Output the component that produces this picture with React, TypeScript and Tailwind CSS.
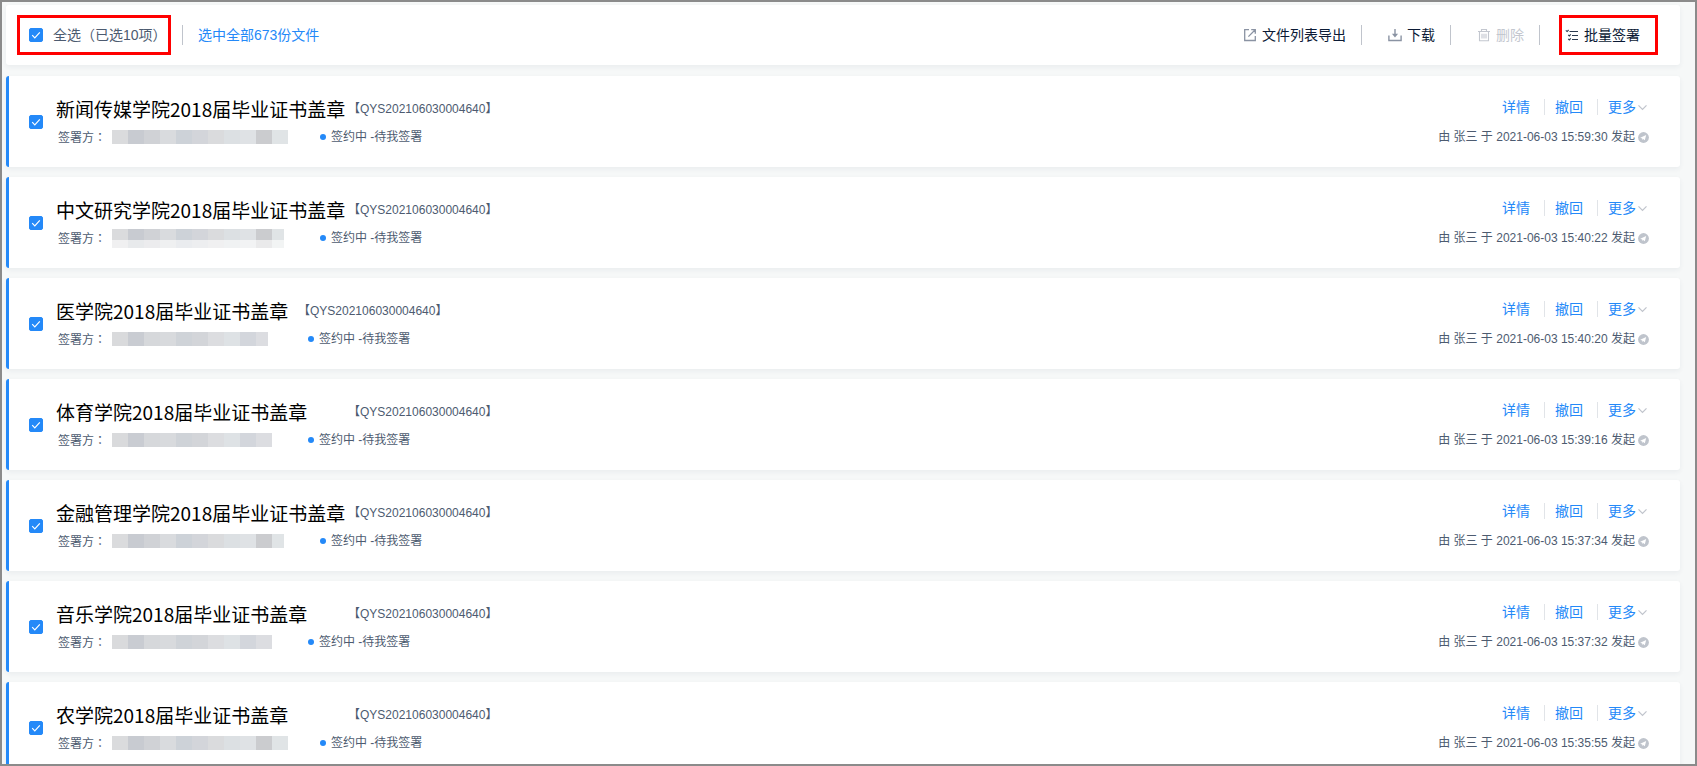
import { ReactNode } from "react";

type Row = {
  title: string;
  time: string;
  codeGap: string;
  statusGap: string;
  blocks: string[];
  last: string;
  faded?: boolean;
};

const wide = ["#dadbdd", "#c8cbd1", "#d0d2d6", "#d9dbde", "#cdd2d8", "#d3d5da", "#dadbdd", "#dce0e3", "#dfe2e5", "#cbcccf", "#e0e4e6"];
const narrow = ["#d9dadc", "#c9ccd2", "#d6d8db", "#d8dadd", "#cfd3d8", "#d3d5d9", "#dcdde0", "#dee2e5", "#d3d6dc", "#dcdde1"];

const rows: Row[] = [
  { title: "新闻传媒学院2018届毕业证书盖章", time: "2021-06-03 15:59:30", codeGap: "min-w-[292px]", statusGap: "w-52", blocks: wide, last: "w-4" },
  { title: "中文研究学院2018届毕业证书盖章", time: "2021-06-03 15:40:22", codeGap: "min-w-[292px]", statusGap: "w-52", blocks: wide, last: "w-3", faded: true },
  { title: "医学院2018届毕业证书盖章", time: "2021-06-03 15:40:20", codeGap: "min-w-[242px]", statusGap: "w-49", blocks: narrow, last: "w-3" },
  { title: "体育学院2018届毕业证书盖章", time: "2021-06-03 15:39:16", codeGap: "min-w-[292px]", statusGap: "w-49", blocks: narrow, last: "w-4" },
  { title: "金融管理学院2018届毕业证书盖章", time: "2021-06-03 15:37:34", codeGap: "min-w-[292px]", statusGap: "w-52", blocks: wide, last: "w-3" },
  { title: "音乐学院2018届毕业证书盖章", time: "2021-06-03 15:37:32", codeGap: "min-w-[292px]", statusGap: "w-49", blocks: narrow, last: "w-4" },
  { title: "农学院2018届毕业证书盖章", time: "2021-06-03 15:35:55", codeGap: "min-w-[292px]", statusGap: "w-52", blocks: wide, last: "w-4" },
];

function Check({ id, label }: { id: string; label?: string }) {
  return (
    <span className="grid size-[14px] shrink-0">
      <input
        id={id}
        type="checkbox"
        defaultChecked
        aria-label={label}
        className="peer col-start-1 row-start-1 size-[14px] appearance-none rounded-[2px] border border-[#c0c4cc] checked:border-[#2489f8] checked:bg-[#2489f8]"
      />
      <svg viewBox="0 0 14 14" className="pointer-events-none invisible col-start-1 row-start-1 size-[14px] peer-checked:visible" fill="none" stroke="#fff" strokeWidth="1.2">
        <path d="M3.2 7.2 5.8 9.8 10.8 4.4" />
      </svg>
    </span>
  );
}

function ExportIcon() {
  return (
    <svg viewBox="0 0 14 14" className="size-[14px]" fill="none" stroke="#8a93a3" strokeWidth="1.3">
      <path d="M6 1.7H1.7v10.8h10.6V8M8.2 1.7h4.1v4.1M12.2 1.8 5.4 8.6" />
    </svg>
  );
}

function DownloadIcon() {
  return (
    <svg viewBox="0 0 14 14" className="size-[14px]" fill="none" stroke="#8a93a3" strokeWidth="1.4">
      <path d="M.9 7.5v5h12.2v-5M7 1v7" />
      <path d="M3.9 5.8h6.2L7 9.4z" fill="#8a93a3" stroke="none" />
    </svg>
  );
}

function TrashIcon() {
  return (
    <svg viewBox="0 0 14 14" className="size-[14px]" fill="none" stroke="#c3c7cf" strokeWidth="1.1">
      <path d="M1 3.5h12M4.5 3.3V1.5h5v1.8M2.5 3.5v9.2h9V3.5M5 5.8v4.8M9 5.8v4.8M7 5.8v4.8" />
    </svg>
  );
}

function BatchIcon() {
  return (
    <svg viewBox="0 0 14 14" className="size-[14px]" fill="none" stroke="#2b3a50" strokeWidth="1.1">
      <path d="M4.5 3.5H13M7 7.5h6M7 11.5h6M.8 2.4l1.3 1.2L3.6 2M3.2 6.8l1.1 1.1 1.5-1.6M3.2 10.8l1.1 1.1 1.5-1.6" />
    </svg>
  );
}

function Tool({ icon, children, disabled }: { icon: ReactNode; children: string; disabled?: boolean }) {
  return (
    <button disabled={disabled} className="flex items-center gap-[5px] text-sm leading-5 text-[#0b1a35] disabled:text-[#c3c7cf]">
      {icon}
      {children}
    </button>
  );
}

function Divider() {
  return <span className="mr-[26px] ml-[15px] h-5 w-px bg-[#c0c4cc]" />;
}

function Blocks({ row, className }: { row: Row; className: string }) {
  return (
    <span className={`flex ${className}`}>
      {row.blocks.map((color, i) => (
        <span key={i} className={i === row.blocks.length - 1 ? row.last : "w-4"} style={{ backgroundColor: color }} />
      ))}
    </span>
  );
}

function FileCard({ row, index }: { row: Row; index: number }) {
  return (
    <li className="flex h-[91px] shrink-0 rounded-[3px] border-l-[3px] border-[#2489f8] bg-white pl-5 shadow-[0_2px_5px_rgba(30,50,80,0.06)]">
      <div className="mt-[39px]">
        <Check id={`file-${index}`} label={row.title} />
      </div>
      <div className="min-w-0 flex-1 pt-[19px] pl-[13px]">
        <div className="flex h-7 items-center">
          <h2 className={`font-['Noto_Sans_CJK_SC',sans-serif] text-[19px] leading-7 whitespace-nowrap text-black ${row.codeGap}`}>{row.title}</h2>
          <span className="text-xs leading-5 whitespace-nowrap text-[#4d5b70]">【QYS202106030004640】</span>
        </div>
        <div className="flex h-7 items-center pl-[2px] text-xs text-[#4d5b70]">
          <span className="w-[54px] whitespace-nowrap">
            签署方<span lang="zh-TW" className="font-['Noto_Sans_CJK_TC',sans-serif]">：</span>
          </span>
          <span className={`flex flex-col ${row.statusGap}`} aria-hidden="true">
            <Blocks row={row} className={row.faded ? "h-[11px]" : "h-[14px]"} />
            {row.faded && <Blocks row={row} className="h-2 opacity-40" />}
          </span>
          <span className="mr-[5px] size-[6px] rounded-full bg-[#2489f8]" />
          <span className="whitespace-nowrap">签约中 -待我签署</span>
        </div>
      </div>
      <div className="flex flex-col items-end pt-5 pr-[31px]">
        <div className="flex h-[22px] items-center text-sm text-[#2489f8]">
          <a href="#detail">详情</a>
          <span className="mr-[10px] ml-[14px] h-4 w-px bg-[#e1e4e8]" />
          <a href="#recall">撤回</a>
          <span className="mr-[10px] ml-[14px] h-4 w-px bg-[#e1e4e8]" />
          <button className="flex items-center gap-[2px]">
            更多
            <svg viewBox="0 0 9 9" className="mr-[2px] size-[9px]" fill="none" stroke="#c0c4cc" strokeWidth="1.2">
              <path d="M.5 2.3 4.5 6.5 8.5 2.3" />
            </svg>
          </button>
        </div>
        <p className="mt-[9px] flex h-5 items-center gap-[3px] text-xs whitespace-nowrap text-[#4d5b70]">
          由 张三 于 {row.time} 发起
          <svg viewBox="0 0 11 11" className="size-[11px]">
            <circle cx="5.5" cy="5.5" r="5.4" fill="#bfc4cc" />
            <path d="M2.2 5.7 8.2 3 6.8 8.3 5.2 6.9 4.5 8 4.2 6.4z" fill="#fff" />
          </svg>
        </p>
      </div>
    </li>
  );
}

export default function App() {
  return (
    <main className="h-screen overflow-hidden border-2 border-[#8b8b8b] bg-[#f6f8f8] pt-[3px] pr-[15px] pl-1 font-['Liberation_Sans','Noto_Sans_CJK_SC',sans-serif]">
      <header className="flex h-[60px] items-center justify-between rounded-[3px] bg-white pr-[22px] pl-[11px] shadow-[0_2px_5px_rgba(30,50,80,0.06)]">
        <div className="flex items-center text-sm leading-5">
          <label htmlFor="select-all" className="flex h-10 w-[154px] items-center gap-[10px] border-[3px] border-[#ff0000] pl-[9px] whitespace-nowrap text-[#4d5b70]">
            <Check id="select-all" />
            <span>全选（已选10项）</span>
          </label>
          <span className="mr-[15px] ml-[11px] h-5 w-px bg-[#c0c4cc]" />
          <a href="#all" className="text-[#2489f8]">选中全部673份文件</a>
        </div>
        <div className="flex items-center">
          <Tool icon={<ExportIcon />}>文件列表导出</Tool>
          <Divider />
          <Tool icon={<DownloadIcon />}>下载</Tool>
          <Divider />
          <Tool icon={<TrashIcon />} disabled>删除</Tool>
          <span className="mr-[19px] ml-[15px] h-5 w-px bg-[#c0c4cc]" />
          <div className="flex h-10 w-[99px] items-center border-[3px] border-[#ff0000] pl-[3px]">
            <Tool icon={<BatchIcon />}>批量签署</Tool>
          </div>
        </div>
      </header>
      <ul className="mt-[11px] flex flex-col gap-[10px]">
        {rows.map((row, i) => (
          <FileCard key={row.title} row={row} index={i} />
        ))}
      </ul>
    </main>
  );
}
